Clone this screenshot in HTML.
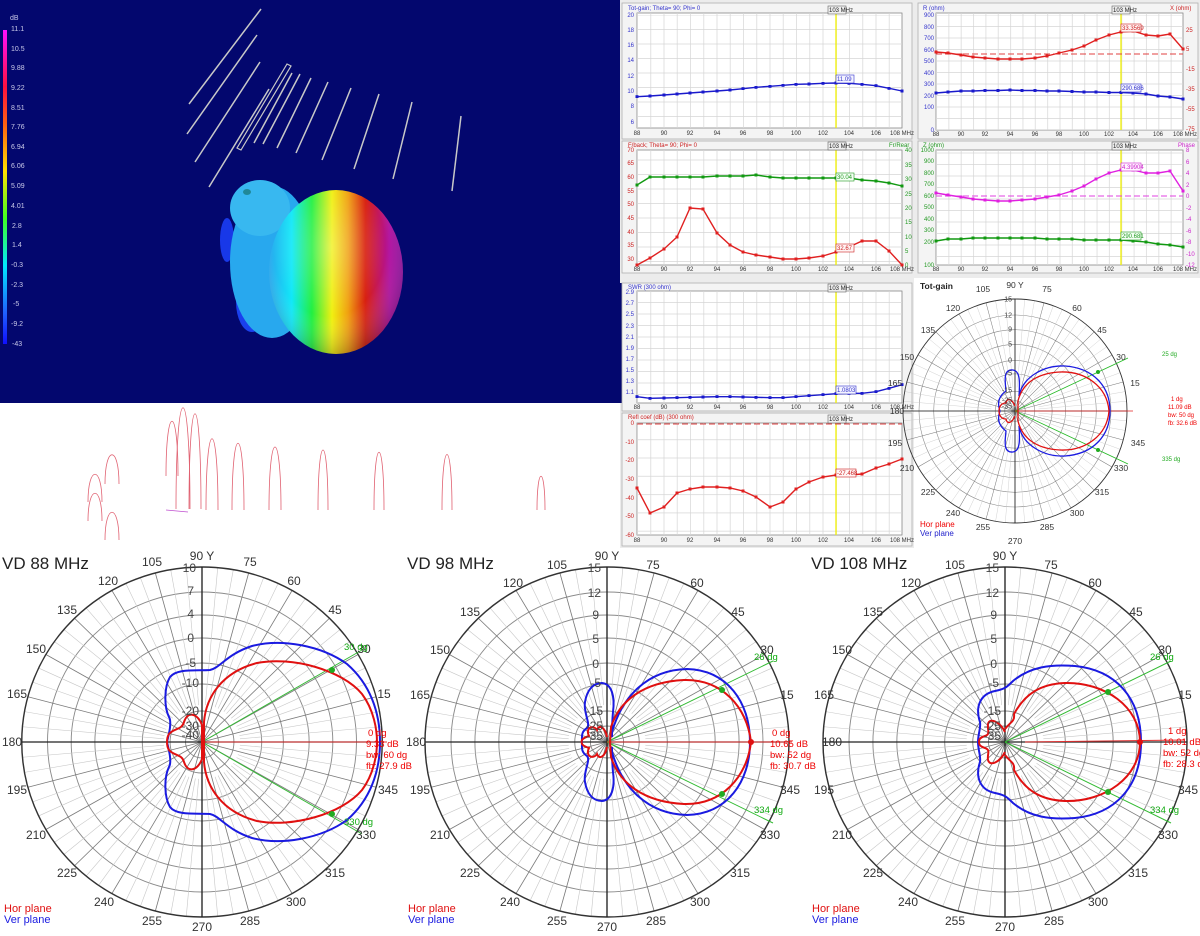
<!DOCTYPE html>
<html><head><meta charset="utf-8"><style>
html,body{margin:0;padding:0;background:#fff;}
svg{display:block;font-family:"Liberation Sans",sans-serif;}
.t6{font-size:6px}
.al{font-size:12px;fill:#333;text-anchor:middle;dominant-baseline:central}
.as{font-size:8px;fill:#333;text-anchor:middle;dominant-baseline:central}
.db{font-size:12px;fill:#444;text-anchor:end;dominant-baseline:central}
.dbs{font-size:8px;fill:#444;text-anchor:end;dominant-baseline:central}
.ri{font-size:9.5px;fill:#e00}
.gi{font-size:9.5px;fill:#1a1}
.ttl{font-size:17px;fill:#222}
</style></head><body>
<svg width="1200" height="936" viewBox="0 0 1200 936" xmlns="http://www.w3.org/2000/svg">
<defs>
<linearGradient id="cb" x1="0" y1="0" x2="0" y2="1">
<stop offset="0" stop-color="#ff10ff"/><stop offset=".18" stop-color="#ff1040"/><stop offset=".3" stop-color="#ff6010"/><stop offset=".45" stop-color="#ffe000"/><stop offset=".6" stop-color="#40ff20"/><stop offset=".75" stop-color="#00e8ff"/><stop offset=".9" stop-color="#2060ff"/><stop offset="1" stop-color="#1010ff"/>
</linearGradient>
<linearGradient id="sg" gradientUnits="userSpaceOnUse" x1="269" y1="0" x2="403" y2="0">
<stop offset="0" stop-color="#2aa8ee"/><stop offset=".17" stop-color="#10e8f8"/><stop offset=".32" stop-color="#20f040"/><stop offset=".47" stop-color="#f0f010"/><stop offset=".59" stop-color="#f0a010"/><stop offset=".72" stop-color="#d82010"/><stop offset=".9" stop-color="#b010a0"/><stop offset="1" stop-color="#9010a0"/>
</linearGradient>
<radialGradient id="sh" cx="0.45" cy="0.35" r="0.7">
<stop offset="0" stop-color="#fff" stop-opacity=".25"/><stop offset=".6" stop-color="#fff" stop-opacity="0"/><stop offset="1" stop-color="#000" stop-opacity=".3"/>
</radialGradient>
<pattern id="v1" x="637" y="0" width="13.25" height="20" patternUnits="userSpaceOnUse"><line x1=".5" y1="0" x2=".5" y2="20" stroke="#d6d6d6" stroke-width=".7"/></pattern>
<pattern id="v2" x="936" y="0" width="12.35" height="20" patternUnits="userSpaceOnUse"><line x1=".5" y1="0" x2=".5" y2="20" stroke="#d6d6d6" stroke-width=".7"/></pattern>
<pattern id="h1" x="0" y="0" width="20" height="14.5" patternUnits="userSpaceOnUse"><line x1="0" y1="0.5" x2="20" y2="0.5" stroke="#d6d6d6" stroke-width=".7"/></pattern>
<pattern id="h2" x="0" y="3" width="20" height="11.5" patternUnits="userSpaceOnUse"><line x1="0" y1="0.5" x2="20" y2="0.5" stroke="#d6d6d6" stroke-width=".7"/></pattern>
<pattern id="h3" x="0" y="0" width="20" height="18.3" patternUnits="userSpaceOnUse"><line x1="0" y1="0.5" x2="20" y2="0.5" stroke="#d6d6d6" stroke-width=".7"/></pattern>
<marker id="mb" markerWidth="3" markerHeight="3" refX="1.5" refY="1.5" markerUnits="userSpaceOnUse"><rect width="3" height="3" fill="#1a1acc"/></marker>
<marker id="mr" markerWidth="3" markerHeight="3" refX="1.5" refY="1.5" markerUnits="userSpaceOnUse"><rect width="3" height="3" fill="#e02020"/></marker>
<marker id="mg" markerWidth="3" markerHeight="3" refX="1.5" refY="1.5" markerUnits="userSpaceOnUse"><rect width="3" height="3" fill="#119911"/></marker>
<marker id="mm" markerWidth="3" markerHeight="3" refX="1.5" refY="1.5" markerUnits="userSpaceOnUse"><rect width="3" height="3" fill="#e020e0"/></marker>
<line id="ls" x1="37" y1="0" x2="175" y2="0" stroke="#c8c8c8" stroke-width=".6"/>
<g id="wd"><line x1="0" y1="0" x2="175" y2="0" stroke="#7a7a7a" stroke-width=".8"/><use href="#ls" transform="rotate(5)"/><use href="#ls" transform="rotate(10)"/></g>
<g id="pg">
<g fill="none" stroke="#8a8a8a" stroke-width=".9">
<circle r="16"/><circle r="31"/><circle r="58"/><circle r="79"/><circle r="104"/><circle r="127"/><circle r="150"/>
</g>
<use href="#wd"/><use href="#wd" transform="rotate(15)"/><use href="#wd" transform="rotate(30)"/><use href="#wd" transform="rotate(45)"/><use href="#wd" transform="rotate(60)"/><use href="#wd" transform="rotate(75)"/><use href="#wd" transform="rotate(90)"/><use href="#wd" transform="rotate(105)"/><use href="#wd" transform="rotate(120)"/><use href="#wd" transform="rotate(135)"/><use href="#wd" transform="rotate(150)"/><use href="#wd" transform="rotate(165)"/><use href="#wd" transform="rotate(180)"/><use href="#wd" transform="rotate(195)"/><use href="#wd" transform="rotate(210)"/><use href="#wd" transform="rotate(225)"/><use href="#wd" transform="rotate(240)"/><use href="#wd" transform="rotate(255)"/><use href="#wd" transform="rotate(270)"/><use href="#wd" transform="rotate(285)"/><use href="#wd" transform="rotate(300)"/><use href="#wd" transform="rotate(315)"/><use href="#wd" transform="rotate(330)"/><use href="#wd" transform="rotate(345)"/>
<circle r="175" fill="none" stroke="#333" stroke-width="1.4"/>
<line x1="-175" y1="0" x2="175" y2="0" stroke="#222" stroke-width="1.3"/>
<line x1="0" y1="-175" x2="0" y2="175" stroke="#222" stroke-width="1.3"/>
</g>
</defs>

<!-- 3D area -->
<rect x="0" y="0" width="620" height="403" fill="#03076e"/>
<rect x="3" y="30" width="4" height="314" fill="url(#cb)"/>
<g class="t6" fill="#c8c8e8" style="font-size:7px">
<text x="10" y="20">dB</text>
<text x="11" y="31">11.1</text><text x="11" y="51">10.5</text><text x="11" y="70">9.88</text><text x="11" y="90">9.22</text><text x="11" y="110">8.51</text><text x="11" y="129">7.76</text><text x="11" y="149">6.94</text><text x="11" y="168">6.06</text><text x="11" y="188">5.09</text><text x="11" y="208">4.01</text><text x="12" y="228">2.8</text><text x="12" y="247">1.4</text><text x="11" y="267">-0.3</text><text x="11" y="287">-2.3</text><text x="13" y="306">-5</text><text x="11" y="326">-9.2</text><text x="12" y="346">-43</text>
</g>
<g stroke="#c8c8c8" stroke-width="1.5" fill="none">
<line x1="261" y1="9" x2="189" y2="104"/><line x1="257" y1="35" x2="187" y2="134"/><line x1="260" y1="62" x2="195" y2="162"/>
<path d="M287,64 L291,66 L241,150 L237,148 Z" stroke-width="1.2"/>
<line x1="269" y1="89" x2="209" y2="187"/><line x1="292" y1="73" x2="254" y2="143"/><line x1="300" y1="74" x2="263" y2="144"/><line x1="311" y1="78" x2="277" y2="148"/><line x1="328" y1="82" x2="296" y2="153"/><line x1="351" y1="88" x2="322" y2="160"/><line x1="379" y1="94" x2="354" y2="169"/><line x1="412" y1="102" x2="393" y2="179"/><line x1="461" y1="116" x2="452" y2="191"/>
</g>
<ellipse cx="227" cy="240" rx="7" ry="22" fill="#1838e8"/>
<ellipse cx="252" cy="302" rx="16" ry="30" fill="#1a40ee"/>
<ellipse cx="272" cy="262" rx="42" ry="76" fill="#28a8ee"/>
<ellipse cx="260" cy="208" rx="30" ry="28" fill="#38b8f0"/>
<ellipse cx="336" cy="272" rx="67" ry="82" fill="url(#sg)"/>
<ellipse cx="336" cy="272" rx="67" ry="82" fill="url(#sh)"/>
<ellipse cx="247" cy="192" rx="4" ry="3" fill="#208898"/>

<!-- arches -->
<g fill="none" stroke="#e06070" stroke-width=".8">
<path d="M166,476 C166,403 178,403 178,476"/><path d="M176,509 C176,374 190,374 190,509"/><path d="M189,509 C189,382 201,382 201,509"/><path d="M206,510 C206,415 218,415 218,510"/><path d="M232,510 C232,421 244,421 244,510"/><path d="M269,510 C269,426 281,426 281,510"/><path d="M318,510 C318,430 328,430 328,510"/><path d="M374,510 C374,433 384,433 384,510"/><path d="M442,510 C442,436 452,436 452,510"/><path d="M537,510 C537,465 545,465 545,510"/>
<path d="M105,484 C105,445 119,445 119,484"/><path d="M88,502 C88,465 102,465 102,502"/><path d="M88,521 C88,484 102,484 102,521"/><path d="M105,540 C105,503 119,503 119,540"/>
<path d="M166,510 L188,512" stroke="#c050d0"/>
</g>

<!-- right chart area -->
<rect x="620" y="0" width="580" height="548" fill="#ececec"/>
<rect x="620" y="283" width="3" height="120" fill="#03076e"/>
<g fill="#f4f4f4" stroke="#b0b0b0" stroke-width=".8">
<rect x="622" y="3" width="290" height="136"/><rect x="918" y="3" width="280" height="136"/>
<rect x="622" y="141" width="290" height="132"/><rect x="918" y="141" width="280" height="132"/>
<rect x="622" y="283" width="290" height="128"/><rect x="622" y="413" width="290" height="133"/>
<rect x="914" y="278" width="286" height="270" stroke="none" fill="#fff"/>
</g>
<g stroke="#888" stroke-width=".8">
<rect x="637" y="13" width="265" height="115" fill="#fff"/><rect x="936" y="13" width="247" height="117" fill="#fff"/>
<rect x="637" y="150" width="265" height="115" fill="#fff"/><rect x="936" y="150" width="247" height="115" fill="#fff"/>
<rect x="637" y="291" width="265" height="112" fill="#fff"/><rect x="637" y="423" width="265" height="112" fill="#fff"/>
</g>
<rect x="637" y="13" width="265" height="115" fill="url(#v1)"/><rect x="637" y="15" width="265" height="113" fill="url(#h1)"/>
<rect x="936" y="13" width="247" height="117" fill="url(#v2)"/><rect x="936" y="15" width="247" height="115" fill="url(#h2)"/>
<rect x="637" y="150" width="265" height="115" fill="url(#v1)"/><rect x="637" y="150" width="265" height="115" fill="url(#h1)"/>
<rect x="936" y="150" width="247" height="115" fill="url(#v2)"/><rect x="936" y="150" width="247" height="115" fill="url(#h2)"/>
<rect x="637" y="291" width="265" height="112" fill="url(#v1)"/><rect x="637" y="292" width="265" height="111" fill="url(#h2)"/>
<rect x="637" y="423" width="265" height="112" fill="url(#v1)"/><rect x="637" y="423" width="265" height="112" fill="url(#h3)"/>
<g stroke="#f0f000" stroke-width="1.3">
<line x1="836" y1="13" x2="836" y2="128"/><line x1="1121" y1="13" x2="1121" y2="130"/><line x1="836" y1="150" x2="836" y2="265"/><line x1="1121" y1="150" x2="1121" y2="265"/><line x1="836" y1="291" x2="836" y2="403"/><line x1="836" y1="423" x2="836" y2="535"/>
</g>
<g fill="none" stroke-dasharray="6,3" stroke-width=".9">
<line x1="936" y1="54" x2="1183" y2="54" stroke="#e04040"/>
<line x1="936" y1="196" x2="1183" y2="196" stroke="#e040e0"/>
<line x1="637" y1="424" x2="902" y2="424" stroke="#e04040"/>
</g>
<g fill="none" stroke-width="1.4">
<polyline stroke="#1a1acc" marker-start="url(#mb)" marker-mid="url(#mb)" marker-end="url(#mb)" points="637,96.7 650,96 664,95 677,94 690,93 703,92 717,91 730,90 743,88.7 756,87.3 770,86.3 783,85.3 796,84.3 809,84 823,83.3 836,83 849,83.3 862,84.3 876,85.7 889,88.3 902,91"/>
<polyline stroke="#e02020" marker-start="url(#mr)" marker-mid="url(#mr)" marker-end="url(#mr)" points="936,52 948,53 961,55 973,57 985,58 998,59 1010,59 1022,59 1035,58 1047,56 1059,53 1072,50 1084,46 1096,40 1109,35 1121,32 1133,31 1146,35 1158,36 1170,34 1183,49"/>
<polyline stroke="#1a1acc" marker-start="url(#mb)" marker-mid="url(#mb)" marker-end="url(#mb)" points="936,93 948,92 961,91 973,91 985,90.5 998,90.5 1010,90 1022,90.5 1035,90.5 1047,91 1059,91 1072,91.5 1084,92 1096,92 1109,92.5 1121,92.5 1133,93 1146,94 1158,96 1170,97 1183,99"/>
<polyline stroke="#119911" marker-start="url(#mg)" marker-mid="url(#mg)" marker-end="url(#mg)" points="637,185 650,177 664,177 677,177 690,177 703,177 717,176 730,176 743,176 756,175 770,177 783,178 796,178 809,178 823,178 836,178 849,178 862,180 876,181 889,183 902,186"/>
<polyline stroke="#e02020" marker-start="url(#mr)" marker-mid="url(#mr)" marker-end="url(#mr)" points="637,265 650,258 664,249 677,237 690,208 703,209 717,233 730,245 743,252 756,255 770,257 783,259 796,259 809,258 823,256 836,252 849,247 862,241 876,241 889,251 902,265"/>
<polyline stroke="#e020e0" marker-start="url(#mm)" marker-mid="url(#mm)" marker-end="url(#mm)" points="936,193 948,195 961,197 973,199 985,200 998,201 1010,201 1022,200 1035,199 1047,197 1059,195 1072,191 1084,186 1096,179 1109,173 1121,170 1133,170 1146,173 1158,173 1170,171 1183,191"/>
<polyline stroke="#119911" marker-start="url(#mg)" marker-mid="url(#mg)" marker-end="url(#mg)" points="936,241 948,239 961,239 973,238 985,238 998,238 1010,238 1022,238 1035,238 1047,239 1059,239 1072,239 1084,240 1096,240 1109,240 1121,240 1133,241 1146,242 1158,244 1170,245 1183,247"/>
<polyline stroke="#1a1acc" marker-start="url(#mb)" marker-mid="url(#mb)" marker-end="url(#mb)" points="637,396.7 650,398.3 664,398 677,397.7 690,397.3 703,397 717,396.7 730,396.7 743,397 756,397.3 770,397.7 783,397.7 796,396.7 809,395.7 823,394.7 836,393.7 849,393.3 862,393.3 876,391.7 889,388.3 902,384.7"/>
<polyline stroke="#e02020" marker-start="url(#mr)" marker-mid="url(#mr)" marker-end="url(#mr)" points="637,488 650,513 664,507 677,493 690,489 703,487 717,487 730,488 743,491 756,497 770,507 783,502 796,489 809,482 823,477 836,475 849,475 862,474 876,468 889,464 902,459"/>
</g>
<!-- chart labels -->
<g class="t6" fill="#333">
<g text-anchor="middle">
<text y="135"><tspan x="637">88</tspan><tspan x="664">90</tspan><tspan x="690">92</tspan><tspan x="717">94</tspan><tspan x="743">96</tspan><tspan x="770">98</tspan><tspan x="796">100</tspan><tspan x="823">102</tspan><tspan x="849">104</tspan><tspan x="876">106</tspan><tspan x="902">108 MHz</tspan></text>
<text y="271"><tspan x="637">88</tspan><tspan x="664">90</tspan><tspan x="690">92</tspan><tspan x="717">94</tspan><tspan x="743">96</tspan><tspan x="770">98</tspan><tspan x="796">100</tspan><tspan x="823">102</tspan><tspan x="849">104</tspan><tspan x="876">106</tspan><tspan x="902">108 MHz</tspan></text>
<text y="409"><tspan x="637">88</tspan><tspan x="664">90</tspan><tspan x="690">92</tspan><tspan x="717">94</tspan><tspan x="743">96</tspan><tspan x="770">98</tspan><tspan x="796">100</tspan><tspan x="823">102</tspan><tspan x="849">104</tspan><tspan x="876">106</tspan><tspan x="902">108 MHz</tspan></text>
<text y="542"><tspan x="637">88</tspan><tspan x="664">90</tspan><tspan x="690">92</tspan><tspan x="717">94</tspan><tspan x="743">96</tspan><tspan x="770">98</tspan><tspan x="796">100</tspan><tspan x="823">102</tspan><tspan x="849">104</tspan><tspan x="876">106</tspan><tspan x="902">108 MHz</tspan></text>
<text y="136"><tspan x="936">88</tspan><tspan x="961">90</tspan><tspan x="985">92</tspan><tspan x="1010">94</tspan><tspan x="1035">96</tspan><tspan x="1059">98</tspan><tspan x="1084">100</tspan><tspan x="1109">102</tspan><tspan x="1133">104</tspan><tspan x="1158">106</tspan><tspan x="1185">108 MHz</tspan></text>
<text y="271"><tspan x="936">88</tspan><tspan x="961">90</tspan><tspan x="985">92</tspan><tspan x="1010">94</tspan><tspan x="1035">96</tspan><tspan x="1059">98</tspan><tspan x="1084">100</tspan><tspan x="1109">102</tspan><tspan x="1133">104</tspan><tspan x="1158">106</tspan><tspan x="1185">108 MHz</tspan></text>
</g>
<g text-anchor="end" fill="#3333cc">
<text x="634" y="17">20</text><text x="634" y="32">18</text><text x="634" y="47">16</text><text x="634" y="62">14</text><text x="634" y="78">12</text><text x="634" y="93">10</text><text x="634" y="108">8</text><text x="634" y="124">6</text>
<text x="934" y="17">900</text><text x="934" y="29">800</text><text x="934" y="40">700</text><text x="934" y="52">600</text><text x="934" y="63">500</text><text x="934" y="75">400</text><text x="934" y="86">300</text><text x="934" y="98">200</text><text x="934" y="109">100</text><text x="934" y="132">0</text>
<text x="634" y="294">2.9</text><text x="634" y="305">2.7</text><text x="634" y="316">2.5</text><text x="634" y="328">2.3</text><text x="634" y="339">2.1</text><text x="634" y="350">1.9</text><text x="634" y="361">1.7</text><text x="634" y="372">1.5</text><text x="634" y="383">1.3</text><text x="634" y="394">1.1</text>
</g>
<g text-anchor="end" fill="#cc2222">
<text x="634" y="152">70</text><text x="634" y="165">65</text><text x="634" y="179">60</text><text x="634" y="193">55</text><text x="634" y="206">50</text><text x="634" y="220">45</text><text x="634" y="234">40</text><text x="634" y="247">35</text><text x="634" y="261">30</text>
<text x="634" y="425">0</text><text x="634" y="444">-10</text><text x="634" y="462">-20</text><text x="634" y="481">-30</text><text x="634" y="500">-40</text><text x="634" y="518">-50</text><text x="634" y="537">-60</text>
</g>
<g fill="#cc2222"><text x="1186" y="32">25</text><text x="1186" y="51">5</text><text x="1186" y="71">-15</text><text x="1186" y="91">-35</text><text x="1186" y="111">-55</text><text x="1186" y="131">-75</text></g>
<g fill="#229922"><text x="905" y="152">40</text><text x="905" y="167">35</text><text x="905" y="181">30</text><text x="905" y="196">25</text><text x="905" y="210">20</text><text x="905" y="224">15</text><text x="905" y="239">10</text><text x="905" y="253">5</text><text x="905" y="267">0</text></g>
<g text-anchor="end" fill="#229922"><text x="934" y="152">1000</text><text x="934" y="163">900</text><text x="934" y="175">800</text><text x="934" y="186">700</text><text x="934" y="198">600</text><text x="934" y="209">500</text><text x="934" y="221">400</text><text x="934" y="232">300</text><text x="934" y="244">200</text><text x="934" y="267">100</text></g>
<g fill="#cc22cc"><text x="1186" y="152">8</text><text x="1186" y="164">6</text><text x="1186" y="175">4</text><text x="1186" y="187">2</text><text x="1186" y="198">0</text><text x="1186" y="210">-2</text><text x="1186" y="221">-4</text><text x="1186" y="233">-6</text><text x="1186" y="244">-8</text><text x="1186" y="256">-10</text><text x="1186" y="267">-12</text></g>
<text x="628" y="10" fill="#3333cc">Tot-gain; Theta= 90; Phi= 0</text>
<text x="923" y="10" fill="#3333cc">R (ohm)</text><text x="1170" y="10" fill="#cc2222">X (ohm)</text>
<text x="628" y="147" fill="#cc2222">F/back; Theta= 90; Phi= 0</text><text x="889" y="147" fill="#229922">Fr/Rear</text>
<text x="923" y="147" fill="#229922">Z (ohm)</text><text x="1178" y="147" fill="#cc22cc">Phase</text>
<text x="628" y="289" fill="#3333cc">SWR (300 ohm)</text>
<text x="628" y="419" fill="#cc2222">Refl coef (dB) (300 ohm)</text>
</g>
<g class="t6" stroke-width=".6">
<g fill="#eee" stroke="#666"><rect x="828" y="6" width="18" height="8"/><rect x="1112" y="6" width="18" height="8"/><rect x="828" y="142" width="18" height="8"/><rect x="1112" y="142" width="18" height="8"/><rect x="828" y="284" width="18" height="8"/><rect x="828" y="415" width="18" height="8"/></g>
<g fill="#222" stroke="none"><text x="829" y="12">103 MHz</text><text x="1113" y="12">103 MHz</text><text x="829" y="148">103 MHz</text><text x="1113" y="148">103 MHz</text><text x="829" y="290">103 MHz</text><text x="829" y="421">103 MHz</text></g>
<g fill="#f4f4ff" stroke="#3333cc"><rect x="836" y="75" width="18" height="8"/><rect x="1121" y="84" width="20" height="8"/><rect x="836" y="386" width="20" height="8"/></g>
<g fill="#3333cc" stroke="none"><text x="837" y="81">11.09</text><text x="1122" y="90">290.686</text><text x="837" y="392">1.0803</text></g>
<g fill="#fff4f4" stroke="#cc2222"><rect x="1121" y="24" width="20" height="8"/><rect x="836" y="244" width="18" height="8"/><rect x="836" y="469" width="20" height="8"/></g>
<g fill="#cc2222" stroke="none"><text x="1122" y="30">33.3569</text><text x="837" y="250">32.67</text><text x="837" y="475">-27.468</text></g>
<g fill="#f4fff4" stroke="#229922"><rect x="836" y="173" width="18" height="8"/><rect x="1121" y="232" width="20" height="8"/></g>
<g fill="#229922" stroke="none"><text x="837" y="179">30.04</text><text x="1122" y="238">290.681</text></g>
<rect x="1121" y="163" width="20" height="8" fill="#fff4ff" stroke="#cc22cc"/><text x="1122" y="169" fill="#cc22cc">4.39904</text>
</g>

<!-- small Tot-gain polar -->
<g transform="translate(1015,411) scale(0.64)"><use href="#pg"/></g>
<g transform="translate(1015,411)" fill="none">
<line x1="0" y1="0" x2="113" y2="-53" stroke="#22bb22" stroke-width=".8"/><line x1="0" y1="0" x2="113" y2="53" stroke="#22bb22" stroke-width=".8"/>
<line x1="0" y1="0" x2="118" y2="0" stroke="#e02020" stroke-width=".8"/>
<g stroke="#1a1ae0" stroke-width="1.3"><path id="sb1" d="M4,-15 C8,-35 30,-46 50,-45 C78,-43 95,-25 95,0"/><use href="#sb1" transform="scale(1,-1)"/><path id="sb2" d="M-15,0 C-18,-8 -16,-15 -9,-20 C-10,-30 -12,-42 -2,-41 C5,-40 5,-30 4,-15"/><use href="#sb2" transform="scale(1,-1)"/></g>
<g stroke="#e01010" stroke-width="1.3"><path id="sr1" d="M3,0 L3,-10 C8,-30 25,-38 45,-39 C70,-40 92,-25 94,0"/><use href="#sr1" transform="scale(1,-1)"/><path id="sr2" d="M0,-5 C-3,-12 -8,-14 -9,-8 C-14,-8 -16,-4 -16,0"/><use href="#sr2" transform="scale(1,-1)"/></g>
<circle cx="83" cy="-39" r="2" fill="#22aa22"/><circle cx="83" cy="39" r="2" fill="#22aa22"/>
</g>
<g class="as" style="font-size:8.5px">
<text x="1015" y="285">90 Y</text><text x="1047" y="289">75</text><text x="1077" y="308">60</text><text x="1102" y="330">45</text><text x="1121" y="357">30</text><text x="1135" y="383">15</text>
<text x="983" y="289">105</text><text x="953" y="308">120</text><text x="928" y="330">135</text><text x="907" y="357">150</text><text x="895" y="383">165</text><text x="897" y="411">180</text>
<text x="895" y="443">195</text><text x="907" y="468">210</text><text x="928" y="492">225</text><text x="953" y="513">240</text><text x="983" y="527">255</text><text x="1015" y="541">270</text>
<text x="1047" y="527">285</text><text x="1077" y="513">300</text><text x="1102" y="492">315</text><text x="1121" y="468">330</text><text x="1138" y="443">345</text>
</g>
<g class="dbs" style="font-size:7px"><text x="1012" y="300">15</text><text x="1012" y="316">12</text><text x="1012" y="330">9</text><text x="1012" y="345">5</text><text x="1012" y="361">0</text><text x="1012" y="374">-5</text><text x="1012" y="391">-15</text><text x="1012" y="401">-25</text><text x="1012" y="407">-35</text></g>
<g style="font-size:6px"><text x="1171" y="401" fill="#e00">1 dg</text><text x="1168" y="409" fill="#e00">11.09 dB</text><text x="1168" y="417" fill="#e00">bw: 50 dg</text><text x="1168" y="425" fill="#e00">fb: 32.6 dB</text><text x="1162" y="356" fill="#2a2">25 dg</text><text x="1162" y="461" fill="#2a2">335 dg</text></g>
<text x="920" y="289" style="font-size:8.5px;font-weight:bold" fill="#222">Tot-gain</text>
<text x="920" y="527" style="font-size:8px" fill="#e00">Hor plane</text><text x="920" y="536" style="font-size:8px" fill="#22c">Ver plane</text>

<!-- bottom polar plots -->
<g transform="translate(202,742) scale(1.03,1)"><use href="#pg"/></g>
<g transform="translate(607,742) scale(1.04,1)"><use href="#pg"/></g>
<g transform="translate(1005,742) scale(1.04,1)"><use href="#pg"/></g>

<g transform="translate(202,742)" fill="none">
<line x1="0" y1="0" x2="160" y2="-92" stroke="#33bb33"/><line x1="0" y1="0" x2="160" y2="92" stroke="#33bb33"/>
<line x1="0" y1="0" x2="185" y2="0" stroke="#e03030"/>
<g stroke="#1a1ae0" stroke-width="2"><path id="b1" d="M-35,0 C-33,-8 -30,-20 -33,-25 C-38,-35 -38,-55 -32,-65 C-25,-74 -5,-71 8,-72 C18,-74 25,-88 50,-96 C80,-104 120,-96 145,-78 C168,-58 178,-30 178,0"/><use href="#b1" transform="scale(1,-1)"/></g>
<g stroke="#e01010" stroke-width="2"><path id="r1" d="M2,0 L2,-20 C4,-45 20,-70 55,-79 C90,-86 140,-72 160,-48 C172,-32 175,-12 175,0"/><use href="#r1" transform="scale(1,-1)"/><path id="r1b" d="M0,0 L0,-17 C-4,-28 -14,-32 -18,-20 C-20,-12 -28,-14 -33,-8 C-35,-5 -35,-2 -35,0"/><use href="#r1b" transform="scale(1,-1)"/></g>
<circle cx="130" cy="-72" r="3" fill="#22aa22"/><circle cx="130" cy="72" r="3" fill="#22aa22"/>
</g>
<g transform="translate(607,742)" fill="none">
<line x1="0" y1="0" x2="166" y2="-81" stroke="#33bb33"/><line x1="0" y1="0" x2="166" y2="81" stroke="#33bb33"/>
<line x1="0" y1="0" x2="185" y2="0" stroke="#e03030"/>
<g stroke="#1a1ae0" stroke-width="2"><path id="b2" d="M5,-10 C15,-45 40,-72 80,-73 C120,-72 143,-40 143,0"/><use href="#b2" transform="scale(1,-1)"/><path id="b2b" d="M-25,0 C-25,-6 -26,-10 -20,-14 C-16,-18 -24,-30 -22,-40 C-20,-52 -14,-59 -5,-59 C5,-58 8,-45 6,-30 C5,-20 5,-12 5,-5"/><use href="#b2b" transform="scale(1,-1)"/></g>
<g stroke="#e01010" stroke-width="2"><path id="r2" d="M3,0 L4,-15 C12,-40 35,-60 77,-62 C115,-63 140,-35 144,0"/><use href="#r2" transform="scale(1,-1)"/><path id="r2b" d="M0,-5 C-2,-15 -8,-18 -10,-12 C-14,-18 -22,-14 -18,-6 C-24,-4 -26,-2 -25,0"/><use href="#r2b" transform="scale(1,-1)"/></g>
<circle cx="115" cy="-52" r="3" fill="#22aa22"/><circle cx="115" cy="52" r="3" fill="#22aa22"/><circle cx="144" cy="0" r="3" fill="#e01010"/>
</g>
<g transform="translate(1005,742)" fill="none">
<line x1="0" y1="0" x2="166" y2="-81" stroke="#33bb33"/><line x1="0" y1="0" x2="166" y2="81" stroke="#33bb33"/>
<line x1="20" y1="0" x2="180" y2="-2" stroke="#e03030"/>
<g stroke="#1a1ae0" stroke-width="2"><path id="b3" d="M-27,0 C-27,-8 -24,-14 -25,-20 C-30,-35 -25,-48 -10,-51 C0,-53 2,-55 8,-61 C25,-75 45,-78 70,-76 C110,-72 136,-45 136,0"/><use href="#b3" transform="scale(1,-1)"/></g>
<g stroke="#e01010" stroke-width="2"><path id="r3" d="M0,-13 C5,-20 10,-20 9,-28 C20,-48 35,-58 60,-59 C100,-60 135,-35 135,0"/><use href="#r3" transform="scale(1,-1)"/><path id="r3b" d="M0,-10 C-5,-20 -15,-25 -17,-18 C-18,-12 -14,-8 -20,-6 C-26,-4 -26,-2 -26,0"/><use href="#r3b" transform="scale(1,-1)"/></g>
<circle cx="103" cy="-50" r="3" fill="#22aa22"/><circle cx="103" cy="50" r="3" fill="#22aa22"/><circle cx="135" cy="0" r="3" fill="#e01010"/>
</g>

<!-- titles & labels bottom -->
<text x="2" y="569" class="ttl">VD  88 MHz</text>
<text x="407" y="569" class="ttl">VD  98 MHz</text>
<text x="811" y="569" class="ttl">VD 108 MHz</text>

<g class="al">
<text x="202" y="556">90 Y</text><text x="250" y="562">75</text><text x="294" y="581">60</text><text x="335" y="610">45</text><text x="364" y="649">30</text><text x="384" y="694">15</text><text x="12" y="742">180</text>
<text x="152" y="562">105</text><text x="108" y="581">120</text><text x="67" y="610">135</text><text x="36" y="649">150</text><text x="17" y="694">165</text>
<text x="17" y="790">195</text><text x="36" y="835">210</text><text x="67" y="873">225</text><text x="104" y="902">240</text><text x="152" y="921">255</text><text x="202" y="927">270</text>
<text x="250" y="921">285</text><text x="296" y="902">300</text><text x="335" y="873">315</text><text x="366" y="835">330</text><text x="388" y="790">345</text>

<text x="607" y="556">90 Y</text><text x="653" y="565">75</text><text x="697" y="583">60</text><text x="738" y="612">45</text><text x="767" y="650">30</text><text x="787" y="695">15</text><text x="416" y="742">180</text>
<text x="557" y="565">105</text><text x="513" y="583">120</text><text x="470" y="612">135</text><text x="440" y="650">150</text><text x="420" y="695">165</text>
<text x="420" y="790">195</text><text x="440" y="835">210</text><text x="470" y="873">225</text><text x="510" y="902">240</text><text x="557" y="921">255</text><text x="607" y="927">270</text>
<text x="656" y="921">285</text><text x="700" y="902">300</text><text x="740" y="873">315</text><text x="770" y="835">330</text><text x="790" y="790">345</text>

<text x="1005" y="556">90 Y</text><text x="1051" y="565">75</text><text x="1095" y="583">60</text><text x="1136" y="612">45</text><text x="1165" y="650">30</text><text x="1185" y="695">15</text><text x="832" y="742">180</text>
<text x="955" y="565">105</text><text x="911" y="583">120</text><text x="873" y="612">135</text><text x="842" y="650">150</text><text x="824" y="695">165</text>
<text x="824" y="790">195</text><text x="842" y="835">210</text><text x="873" y="873">225</text><text x="908" y="902">240</text><text x="955" y="921">255</text><text x="1005" y="927">270</text>
<text x="1054" y="921">285</text><text x="1098" y="902">300</text><text x="1138" y="873">315</text><text x="1168" y="835">330</text><text x="1188" y="790">345</text>
</g>
<g class="db">
<text x="196" y="568">10</text><text x="194" y="591">7</text><text x="194" y="614">4</text><text x="194" y="638">0</text><text x="196" y="663">-5</text><text x="199" y="683">-10</text><text x="199" y="711">-20</text><text x="199" y="726">-30</text><text x="199" y="735">-40</text>
<text x="601" y="568">15</text><text x="601" y="593">12</text><text x="599" y="615">9</text><text x="599" y="639">5</text><text x="599" y="664">0</text><text x="601" y="683">-5</text><text x="603" y="711">-15</text><text x="603" y="726">-25</text><text x="603" y="736">-35</text>
<text x="999" y="568">15</text><text x="999" y="593">12</text><text x="997" y="615">9</text><text x="997" y="639">5</text><text x="997" y="664">0</text><text x="999" y="683">-5</text><text x="1001" y="711">-15</text><text x="1001" y="726">-25</text><text x="1001" y="736">-35</text>
</g>
<g class="ri">
<text x="368" y="736">0 dg</text><text x="366" y="747">9.33 dB</text><text x="366" y="758">bw: 60 dg</text><text x="366" y="769">fb: 27.9 dB</text>
<text x="772" y="736">0 dg</text><text x="770" y="747">10.65 dB</text><text x="770" y="758">bw: 52 dg</text><text x="770" y="769">fb: 30.7 dB</text>
<text x="1168" y="734">1 dg</text><text x="1163" y="745">10.01 dB</text><text x="1163" y="756">bw: 52 dg</text><text x="1163" y="767">fb: 28.3 dB</text>
</g>
<g class="gi">
<text x="344" y="650">30 dg</text><text x="344" y="825">330 dg</text>
<text x="754" y="660">26 dg</text><text x="754" y="813">334 dg</text>
<text x="1150" y="660">26 dg</text><text x="1150" y="813">334 dg</text>
</g>
<g style="font-size:11px">
<text x="4" y="912" fill="#e01010">Hor plane</text><text x="4" y="923" fill="#1a1ae0">Ver plane</text>
<text x="408" y="912" fill="#e01010">Hor plane</text><text x="408" y="923" fill="#1a1ae0">Ver plane</text>
<text x="812" y="912" fill="#e01010">Hor plane</text><text x="812" y="923" fill="#1a1ae0">Ver plane</text>
</g>
</svg>
</body></html>
